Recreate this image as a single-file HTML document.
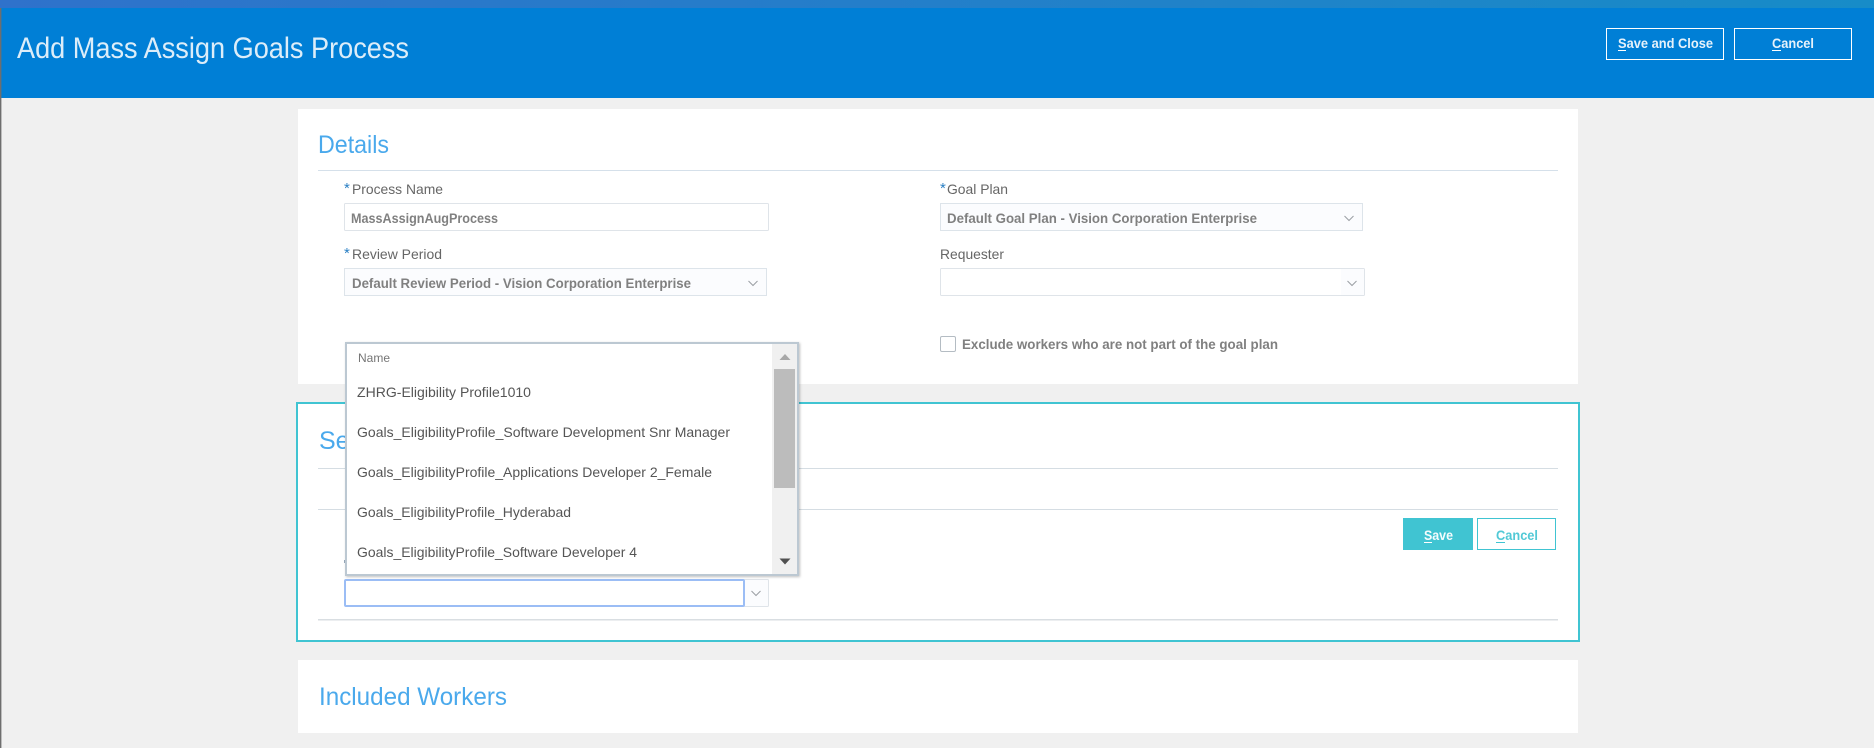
<!DOCTYPE html>
<html>
<head>
<meta charset="utf-8">
<title>Add Mass Assign Goals Process</title>
<style>
html,body{margin:0;padding:0;width:1874px;height:748px;overflow:hidden;background:#f0f0f0}
svg{display:block;position:absolute;left:0;top:0}
text{font-family:"Liberation Sans",sans-serif}
.lbl{font-size:14px;fill:#666}
.val{font-size:13.5px;font-weight:bold;fill:#808080}
.head{font-size:25px;fill:#4aa9ec}
.row{font-size:14px;fill:#555}
.ast{font-size:15px;fill:#2a7fc4}
.btn{font-size:13.5px;font-weight:bold}
.chev{fill:none;stroke:#9a9ea3;stroke-width:1}
</style>
</head>
<body>
<svg width="1874" height="748" viewBox="0 0 1874 748" xmlns="http://www.w3.org/2000/svg">
<defs>
<linearGradient id="strip" x1="0" x2="1" y1="0" y2="0">
<stop offset="0" stop-color="#2f72cb"/>
<stop offset="1" stop-color="#178cc8"/>
</linearGradient>
<filter id="sh" x="-5%" y="-5%" width="110%" height="110%">
<feDropShadow dx="1" dy="1" stdDeviation="1.2" flood-color="#000" flood-opacity=".25"/>
</filter>
</defs>

<rect width="1874" height="748" fill="#f0f0f0"/>
<!-- header -->
<rect y="8" width="1874" height="90" fill="#007fd6"/>
<rect width="1874" height="8" fill="url(#strip)"/>
<rect x="0" y="8" width="1.4" height="740" fill="#6e6e6e"/>
<text x="17" y="58" font-size="30" fill="#dcedf9" textLength="392" lengthAdjust="spacingAndGlyphs">Add Mass Assign Goals Process</text>

<rect x="1606.5" y="28.5" width="117" height="31" fill="none" stroke="#fff"/>
<text class="btn" x="1618" y="48" fill="#e6f2fb" textLength="95" lengthAdjust="spacingAndGlyphs">Save and Close</text>
<rect x="1618" y="50" width="8" height="1" fill="#fff"/>
<rect x="1734.5" y="28.5" width="117" height="31" fill="none" stroke="#fff"/>
<text class="btn" x="1772" y="48" fill="#e6f2fb" textLength="42" lengthAdjust="spacingAndGlyphs">Cancel</text>
<rect x="1772" y="50" width="9" height="1" fill="#fff"/>

<!-- details panel -->
<rect x="298" y="109" width="1280" height="275" fill="#fff"/>
<text class="head" x="318" y="153" textLength="71" lengthAdjust="spacingAndGlyphs">Details</text>
<rect x="318" y="170" width="1240" height="1" fill="#d5e0ea"/>

<text class="ast" x="344" y="193">*</text>
<text class="lbl" x="352" y="194" textLength="91" lengthAdjust="spacingAndGlyphs">Process Name</text>
<rect x="344.5" y="203.5" width="424" height="27" rx="1" fill="#fff" stroke="#dfe4e9"/>
<text class="val" x="351" y="223" textLength="147" lengthAdjust="spacingAndGlyphs">MassAssignAugProcess</text>

<text class="ast" x="344" y="258">*</text>
<text class="lbl" x="352" y="259" textLength="90" lengthAdjust="spacingAndGlyphs">Review Period</text>
<rect x="344.5" y="268.5" width="422" height="27" fill="#fbfcfe" stroke="#dde4ea"/>
<text class="val" x="352" y="288" textLength="339" lengthAdjust="spacingAndGlyphs">Default Review Period - Vision Corporation Enterprise</text>
<path class="chev" d="M748.5 281l4.5 4.5 4.5-4.5"/>

<text class="ast" x="940" y="193">*</text>
<text class="lbl" x="947" y="194" textLength="61" lengthAdjust="spacingAndGlyphs">Goal Plan</text>
<rect x="940.5" y="203.5" width="422" height="27" fill="#fbfcfe" stroke="#dde4ea"/>
<text class="val" x="947" y="223" textLength="310" lengthAdjust="spacingAndGlyphs">Default Goal Plan - Vision Corporation Enterprise</text>
<path class="chev" d="M1344.5 216l4.5 4.5 4.5-4.5"/>

<text class="lbl" x="940" y="259" textLength="64" lengthAdjust="spacingAndGlyphs">Requester</text>
<rect x="940.5" y="268.5" width="424" height="27" rx="1" fill="#fff" stroke="#dfe4e9"/>
<rect x="1341" y="269" width="23" height="26" fill="#fbfcfe"/>
<path class="chev" d="M1347.5 281l4.5 4.5 4.5-4.5"/>

<rect x="940.5" y="336.5" width="15" height="15" rx="1.5" fill="#fff" stroke="#b4bcc3"/>
<text class="val" x="962" y="349" textLength="316" lengthAdjust="spacingAndGlyphs">Exclude workers who are not part of the goal plan</text>

<!-- selected section -->
<rect x="297" y="403" width="1282" height="238" fill="#fff" stroke="#40c4d2" stroke-width="2"/>
<text class="head" x="319" y="449">Select</text>
<rect x="318" y="468" width="1240" height="1" fill="#d5dde3"/>
<rect x="318" y="509" width="1240" height="1" fill="#d5dde3"/>
<rect x="318" y="619" width="1240" height="1.5" fill="#d9dee2"/>

<rect x="1403" y="518" width="70" height="32" fill="#40c4d2"/>
<text class="btn" x="1424" y="540" fill="#f4fcfd" textLength="29" lengthAdjust="spacingAndGlyphs">Save</text>
<rect x="1424" y="542" width="8" height="1" fill="#fff"/>
<rect x="1477.5" y="518.5" width="78" height="31" fill="#fff" stroke="#40c4d2"/>
<text class="btn" x="1496" y="540" fill="#52c9d6" textLength="42" lengthAdjust="spacingAndGlyphs">Cancel</text>
<rect x="1496" y="542" width="9" height="1" fill="#40c4d2"/>

<rect x="344" y="560" width="1" height="3" fill="#9ab"/>
<rect x="744" y="579.5" width="24.5" height="27" rx="1" fill="#fbfcfe" stroke="#dfe4e9"/>
<rect x="345" y="580" width="399" height="26" rx="1" fill="#fff" stroke="#9bbdf5" stroke-width="2"/>
<path class="chev" d="M751.5 591l4.5 4.5 4.5-4.5"/>

<!-- dropdown popup -->
<rect x="346" y="343" width="452" height="232" fill="#fff" stroke="#bcc8d2" stroke-width="2" filter="url(#sh)"/>
<rect x="772" y="344" width="25" height="230" fill="#f0f0f0"/>
<rect x="774" y="369" width="21" height="119" fill="#bcbcbc"/>
<path d="M779.5 360l5.5-6 5.5 6z" fill="#a8a8a8"/>
<path d="M779.5 558.5l5.5 6 5.5-6z" fill="#505050"/>
<text x="358" y="362" font-size="12" fill="#757575" textLength="32" lengthAdjust="spacingAndGlyphs">Name</text>
<text class="row" x="357" y="397" textLength="174" lengthAdjust="spacingAndGlyphs">ZHRG-Eligibility Profile1010</text>
<text class="row" x="357" y="437" textLength="373" lengthAdjust="spacingAndGlyphs">Goals_EligibilityProfile_Software Development Snr Manager</text>
<text class="row" x="357" y="477" textLength="355" lengthAdjust="spacingAndGlyphs">Goals_EligibilityProfile_Applications Developer 2_Female</text>
<text class="row" x="357" y="517" textLength="214" lengthAdjust="spacingAndGlyphs">Goals_EligibilityProfile_Hyderabad</text>
<text class="row" x="357" y="557" textLength="280" lengthAdjust="spacingAndGlyphs">Goals_EligibilityProfile_Software Developer 4</text>

<!-- included workers -->
<rect x="298" y="660" width="1280" height="73" fill="#fff"/>
<text class="head" x="319" y="705" textLength="188" lengthAdjust="spacingAndGlyphs">Included Workers</text>
</svg>
</body>
</html>
